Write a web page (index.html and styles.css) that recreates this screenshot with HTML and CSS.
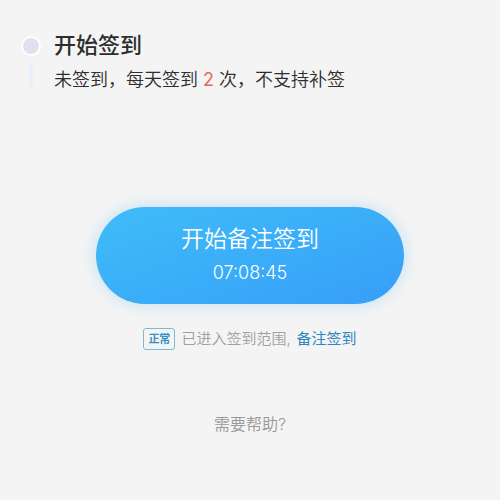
FILE: index.html
```html
<!DOCTYPE html>
<html lang="zh-CN">
<head>
<meta charset="utf-8">
<meta name="viewport" content="width=device-width, initial-scale=1">
<title>开始签到</title>
<link rel="stylesheet" href="styles.css">
</head>
<body>
<main class="page">
  <section class="step">
    <div class="rail"><span class="dot"></span><span class="line"></span></div>
    <div class="info">
      <h1 class="title">开始签到</h1>
      <p class="summary">未签到，每天签到 <span class="count">2</span> 次，不支持补签</p>
    </div>
  </section>
  <button class="checkin" type="button">
    <span class="checkin-label">开始备注签到</span>
    <time class="checkin-time">07:08:45</time>
  </button>
  <p class="status">
    <span class="badge">正常</span>
    <span>已进入签到范围,</span>
    <a class="note" href="#note">备注签到</a>
  </p>
  <a class="help" href="#help">需要帮助?</a>
</main>
</body>
</html>
```
FILE: styles.css
```css
* {
  box-sizing: border-box;
}

body {
  margin: 0;
  background: #f4f4f4;
  color: #2d2d2d;
  font-family: Inter, "Noto Sans CJK SC", sans-serif;
}

.page {
  display: flex;
  flex-direction: column;
  align-items: center;
  padding: 28px 20px;
}

.step {
  align-self: stretch;
  display: flex;
  gap: 12px;
}

.rail {
  display: flex;
  flex-direction: column;
  align-items: center;
  gap: 8px;
  width: 22px;
  padding-top: 8px;
}

.dot {
  width: 20px;
  height: 20px;
  border: 2px solid #fff;
  border-radius: 50%;
  background: #e0e1ed;
}

.line {
  width: 4px;
  height: 24px;
  background: #e9effb;
}

.title,
.summary,
.status {
  margin: 0;
}

.title {
  font-size: 22px;
  line-height: 34px;
  font-weight: 500;
}

.summary {
  font-size: 18px;
  line-height: 36px;
  font-weight: 350;
}

.count {
  color: #e66a5c;
  font-weight: 400;
}

.checkin {
  display: flex;
  flex-direction: column;
  align-items: center;
  justify-content: center;
  gap: 2px;
  width: 67%;
  margin-top: 109px;
  padding: 15px 24px 16px;
  border: 0;
  border-radius: 60px;
  background: linear-gradient(160deg, #40bcf7, #3aaef8 50%, #379ef8);
  box-shadow: 0 0 16px rgba(64, 180, 250, 0.3);
  color: #fff;
  font-family: inherit;
  cursor: pointer;
}

.checkin-label {
  font-size: 23px;
  line-height: 34px;
  font-weight: 350;
}

.checkin-time {
  font-size: 18px;
  line-height: 30px;
  font-weight: 350;
}

.status {
  display: flex;
  align-items: center;
  gap: 6px;
  margin-top: 23px;
  color: #a0a0a0;
  font-size: 15px;
  line-height: 24px;
  font-weight: 350;
}

.badge {
  padding: 0 4px;
  border: 1px solid #7fb8d6;
  border-radius: 3px;
  color: #3590c4;
  font-size: 11px;
  line-height: 20px;
  font-weight: 700;
}

.note {
  color: #2f86bd;
  font-weight: 400;
  text-decoration: none;
}

.help {
  margin-top: 61px;
  color: #999;
  font-size: 16px;
  line-height: 24px;
  font-weight: 350;
  text-decoration: none;
}
```
